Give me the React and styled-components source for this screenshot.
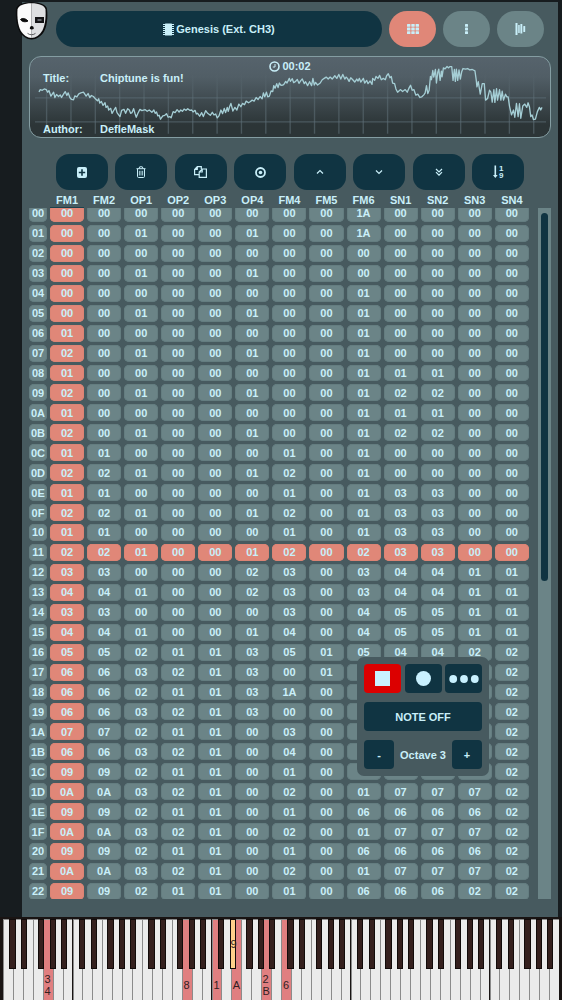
import React, { useLayoutEffect, useRef, useState } from "react";
//styled-components
import styled, { createGlobalStyle } from "styled-components";

const GlobalStyle = createGlobalStyle`
  * {
    box-sizing: border-box;
  }
  body {
    margin: 0;
    background-color: #171c1f;
    color: #c9eff9;
    font-family: "Liberation Sans", Arial, sans-serif;
    font-size: 11px;
    font-weight: bold;
    line-height: 12px;
  }
  button {
    border: 0;
    padding: 0;
    color: inherit;
    font: inherit;
    cursor: pointer;
  }
  svg {
    display: block;
  }
`;

//layout
const DivApp = styled.div`
  position: relative;
  display: flex;
  flex-direction: column;
  height: 100vh;
  padding-top: 2px;
`;
const MainPanel = styled.main`
  position: relative;
  flex: 1;
  min-height: 0;
  display: flex;
  flex-direction: column;
  margin: 0 4px 0 22px;
  padding: 9px 7px 18px;
  background-color: #475a5f;
`;
const SvgLogo = styled.svg`
  position: absolute;
  top: -1px;
  left: -8px;
  width: 35px;
  height: 40px;
`;

//header
const Header = styled.header`
  display: flex;
  gap: 7px;
  padding: 0 7px 0 27px;
`;
const ButtonSystem = styled.button`
  flex: 1;
  display: flex;
  align-items: center;
  justify-content: center;
  gap: 2px;
  height: 36px;
  border-radius: 18px;
  background-color: #103442;
`;
const ButtonView = styled.button`
  display: flex;
  align-items: center;
  justify-content: center;
  width: 47px;
  height: 36px;
  border-radius: 18px;
  background-color: ${({ $active }) => ($active ? "#e08778" : "#6b8487")};
`;

//display
const SectionDisplay = styled.section`
  position: relative;
  display: flex;
  flex-direction: column;
  height: 82px;
  margin-top: 9px;
  padding: 3px 13px 2px;
  border: 1px solid #849da2;
  border-radius: 12px;
  background: linear-gradient(#56636c 0%, #515e66 25%, #2c3537 85%);
`;
const SvgWave = styled.svg`
  position: absolute;
  inset: 0;
  width: 100%;
  height: 100%;
`;
const DivTime = styled.div`
  position: relative;
  display: flex;
  align-items: center;
  justify-content: center;
  gap: 2px;
`;
const DlSong = styled.dl`
  position: relative;
  flex: 1;
  display: flex;
  flex-direction: column;
  justify-content: space-between;
  margin: 0;
`;
const DivSongRow = styled.div`
  display: flex;
`;
const DtLabel = styled.dt`
  width: 57px;
`;
const DdValue = styled.dd`
  margin: 0;
`;

//toolbar
const DivToolbar = styled.div`
  display: flex;
  justify-content: space-between;
  margin: 16px 27px 1px;
`;
const ButtonTool = styled.button`
  display: flex;
  align-items: center;
  justify-content: center;
  width: 52px;
  height: 36px;
  border-radius: 13px;
  background-color: #103442;
`;

//order list
const DivOrders = styled.div`
  flex: 1;
  min-height: 0;
  display: flex;
  gap: 6px;
`;
const DivViewport = styled.div`
  flex: 1;
  min-width: 0;
  margin-left: -3px;
  overflow: hidden;
`;
const TableOrders = styled.table`
  width: 100%;
  height: calc(100% + 13px);
  table-layout: fixed;
  border-collapse: separate;
  border-spacing: 3px;
`;
const ThChannel = styled.th`
  position: sticky;
  top: 0;
  z-index: 1;
  height: 17px;
  width: ${({ $narrow }) => ($narrow ? "18px" : "auto")};
  padding: 2px 0 0;
  background-color: #475a5f;
  border-bottom: 1px solid ${({ $active }) => ($active ? "#1a424e" : "#475a5f")};
`;
const ThNumber = styled.th`
  padding: 0;
  border-radius: 5px;
  background-color: #6b8487;
  box-shadow: inset 0 0 0 1px #647d80;
`;
const TdOrder = styled.td`
  padding: 0;
  border-radius: 5px;
  text-align: center;
  background-color: ${({ $active }) => ($active ? "#e08778" : "#6b8487")};
  box-shadow: inset 0 0 0 1px ${({ $active }) => ($active ? "#dc8475" : "#647d80")};
`;
const DivTrack = styled.div`
  width: 13px;
  margin-top: 17px;
  padding: 5px 3px;
  background-color: #6b8487;
`;
const DivThumb = styled.div`
  height: 54%;
  border-radius: 4px;
  background-color: #103442;
`;

//floating pad
const DivPad = styled.div`
  position: absolute;
  right: 73px;
  bottom: 224px;
  z-index: 2;
  display: grid;
  gap: 9px;
  width: 132px;
  padding: 7px;
  border-radius: 7px;
  background-color: #475a5f;
`;
const DivPadRow = styled.div`
  display: flex;
  align-items: center;
  justify-content: space-between;
`;
const ButtonPad = styled.button`
  display: flex;
  align-items: center;
  justify-content: center;
  width: ${({ $width }) => $width || "37px"};
  height: 29px;
  border-radius: 4px;
  background-color: ${({ $recording }) => ($recording ? "#dc0000" : "#103442")};
`;

//keyboard
const DivKeyboard = styled.div`
  display: flex;
  height: 83px;
  padding: 2px 3px 0;
  background-color: #191413;
`;
const DivOctave = styled.div`
  position: relative;
  flex: 1;
  display: flex;
`;
const ButtonWhite = styled.button`
  flex: 1;
  display: flex;
  align-items: flex-end;
  justify-content: center;
  min-width: 0;
  height: 81px;
  padding-bottom: ${({ $lines }) => ($lines > 1 ? "3px" : "9px")};
  border-top: 1px solid #8b8b8b;
  background-color: ${({ $pressed }) => ($pressed ? "#e07f80" : "#ebebeb")};
  box-shadow: inset 1px 0 0 #8b8b8b;
  color: #33201f;
  font-weight: normal;
  text-align: left;
  white-space: pre-line;
`;
const ButtonBlack = styled.button`
  position: absolute;
  top: 0;
  left: ${({ $left }) => $left};
  width: 9%;
  height: 50px;
  border: 1px solid #120b0a;
  background-color: ${({ $pressed }) => ($pressed ? "#ffd08a" : "#35201e")};
  color: #33201f;
  font-weight: normal;
`;

const channels = ["FM1", "FM2", "OP1", "OP2", "OP3", "OP4", "FM4", "FM5", "FM6", "SN1", "SN2", "SN3", "SN4"];

//"--" is an empty cell
const orders = [
  "00 00 00 00 00 00 00 00 1A 00 00 00 00",
  "00 00 01 00 00 01 00 00 1A 00 00 00 00",
  "00 00 00 00 00 00 00 00 00 00 00 00 00",
  "00 00 01 00 00 01 00 00 00 00 00 00 00",
  "00 00 00 00 00 00 00 00 01 00 00 00 00",
  "00 00 01 00 00 01 00 00 01 00 00 00 00",
  "01 00 00 00 00 00 00 00 01 00 00 00 00",
  "02 00 01 00 00 01 00 00 01 00 00 00 00",
  "01 00 00 00 00 00 00 00 01 01 01 00 00",
  "02 00 01 00 00 01 00 00 01 02 02 00 00",
  "01 00 00 00 00 00 00 00 01 01 01 00 00",
  "02 00 01 00 00 01 00 00 01 02 02 00 00",
  "01 01 00 00 00 00 01 00 01 00 00 00 00",
  "02 02 01 00 00 01 02 00 01 00 00 00 00",
  "01 01 00 00 00 00 01 00 01 03 03 00 00",
  "02 02 01 00 00 01 02 00 01 03 03 00 00",
  "01 01 00 00 00 00 01 00 01 03 03 00 00",
  "02 02 01 00 00 01 02 00 02 03 03 00 00",
  "03 03 00 00 00 02 03 00 03 04 04 01 01",
  "04 04 01 00 00 02 03 00 03 04 04 01 01",
  "03 03 00 00 00 00 03 00 04 05 05 01 01",
  "04 04 01 00 00 01 04 00 04 05 05 01 01",
  "05 05 02 01 01 03 05 01 05 04 04 02 02",
  "06 06 03 02 01 03 00 01 -- -- -- -- 02",
  "06 06 02 01 01 03 1A 00 -- -- -- -- 02",
  "06 06 03 02 01 03 00 00 -- -- -- -- 02",
  "07 07 02 01 01 00 03 00 -- -- -- -- 02",
  "06 06 03 02 01 00 04 00 -- -- -- -- 02",
  "09 09 02 01 01 00 01 00 -- -- -- -- 02",
  "0A 0A 03 02 01 00 02 00 01 07 07 07 02",
  "09 09 02 01 01 00 01 00 06 06 06 06 02",
  "0A 0A 03 02 01 00 02 00 01 07 07 07 02",
  "09 09 02 01 01 00 01 00 06 06 06 06 02",
  "0A 0A 03 02 01 00 02 00 01 07 07 07 02",
  "09 09 02 01 01 00 01 00 06 06 06 02 02",
].map((row) => row.split(" "));

//pressed keys, by white key number and by octave-note for the black ones
const whitePressed = { 4: "3\n4", 18: "8", 21: "1", 23: "A", 26: "2\nB", 28: "6" };
const blackPressed = { "3-1": "9" };
const blackKeys = [
  { left: "9%", name: "C#" },
  { left: "26%", name: "D#" },
  { left: "50%", name: "F#" },
  { left: "67%", name: "G#" },
  { left: "83%", name: "A#" },
];
const whiteNames = ["C", "D", "E", "F", "G", "A", "B"];

const wave =
  "114,275 118,268 124,270 130,266 136,268 140,276 144,271 150,288 155,280 158,276 162,292 167,283 173,289 178,284 182,292 188,282 193,274 198,286 202,278 207,292 212,298 218,299 222,287 228,290 234,281 240,278 248,276 256,288 262,280 267,292 272,286 278,289 284,296 290,302 294,296 297,309 302,304 307,316 313,308 316,322 321,318 324,330 330,325 334,340 340,330 345,322 349,338 354,345 358,350 363,331 370,328 375,340 381,326 386,330 390,340 394,338 399,326 403,340 407,352 412,340 418,328 424,332 434,329 440,334 446,330 454,337 460,330 464,340 468,336 472,348 476,346 480,358 487,348 493,346 498,341 503,352 508,350 512,354 518,335 524,338 530,329 536,336 541,330 546,334 551,327 557,331 562,326 568,331 574,330 578,336 584,331 588,342 592,340 598,349 604,338 609,350 616,332 622,340 630,346 636,337 641,345 646,342 651,354 656,348 662,330 667,341 672,325 676,338 681,322 684,334 688,320 692,310 698,333 704,322 710,330 716,312 722,320 727,310 733,314 738,303 745,308 750,305 756,300 762,303 768,292 774,298 780,289 786,296 790,278 794,290 799,276 803,290 808,288 813,272 818,274 821,256 825,264 830,250 834,262 838,248 843,255 849,254 853,250 857,243 861,248 868,234 871,243 877,235 881,247 887,243 892,237 897,249 903,240 907,236 913,250 917,244 923,256 929,244 935,256 939,234 943,254 947,246 953,254 961,248 967,238 973,234 979,230 985,236 991,230 997,236 1005,226 1011,234 1017,222 1023,236 1029,222 1035,236 1039,230 1043,234 1048,243 1053,232 1059,238 1065,245 1071,236 1075,242 1079,234 1083,245 1091,234 1095,248 1101,240 1105,250 1111,242 1117,252 1119,234 1125,240 1129,228 1135,234 1140,225 1145,238 1151,234 1157,238 1161,226 1166,220 1171,232 1175,228 1179,248 1185,250 1189,266 1194,276 1203,268 1209,274 1217,268 1223,276 1229,262 1233,255 1238,270 1243,268 1249,285 1255,282 1261,292 1267,290 1273,284 1277,278 1281,256 1285,280 1289,270 1293,228 1296,238 1300,210 1303,230 1308,207 1311,248 1315,215 1318,206 1322,240 1326,212 1328,229 1332,202 1337,205 1343,198 1347,202 1352,198 1357,198 1361,240 1365,207 1368,243 1371,206 1375,240 1379,208 1383,236 1387,214 1391,204 1399,206 1405,204 1411,208 1419,207 1427,211 1431,240 1433,260 1437,244 1443,282 1449,250 1455,250 1459,300 1465,295 1471,270 1475,276 1479,306 1484,268 1487,307 1492,265 1495,300 1501,268 1505,300 1509,273 1513,300 1519,282 1523,290 1527,290 1531,318 1537,345 1543,330 1547,352 1552,310 1557,350 1561,311 1565,355 1571,318 1577,312 1583,322 1587,308 1591,320 1595,350 1599,345 1603,359 1609,358 1615,335 1621,322 1625,330 1629,322";

//icons
const LogoMask = () => (
  <SvgLogo viewBox="0 0 35 40" aria-hidden="true">
    <path d="M17.500 1C9 1 2.500 4 2 8c-.6 9 .6 17 3.500 22.500C8 35 13 38.500 17.500 38.500S27.500 35 30 30.500C33 25 34 17 33 8 32.500 4 26 1 17.500 1z" fill="#0b0b0c" />
    <path d="M17.500 2.200C10 2.200 4 4.600 3.500 8.500 3 17 4 24.500 6.600 29.500 9 34 13.500 37 17.500 37z" fill="#fbfbfb" />
    <path d="M17.500 2.200C25 2.200 31 4.600 31.500 8.500 32 17 31 24.500 28.400 29.500 26 34 21.500 37 17.500 37z" fill="#dedfe1" />
    <path d="M6.500 18.500c1.500-1.600 4.500-1.600 7.500 1.500-2.500 1.300-6 1-7.500-1.500z" fill="#0a0a0a" stroke="#0a0a0a" strokeWidth="1" />
    <rect x="21" y="16" width="9" height="6" fill="#141416" />
    <rect x="23.500" y="18" width="4" height="2" fill="#63656a" />
    <path d="M17.800 25c1.400 0 2 1.200 2 2.800-.8.900-3.200.9-4 0 0-1.600.6-2.800 2-2.800z" fill="#0a0a0a" />
    <path d="M13.500 32.300c2 1.900 6 1.900 8 0" fill="none" stroke="#3a3a3c" strokeWidth="0.800" />
  </SvgLogo>
);
const IconChip = () => (
  <svg width="11" height="13" viewBox="0 0 11 13" fill="currentColor" aria-hidden="true">
    <rect x="2" y="0.500" width="7" height="12" rx="0.600" />
    {[1, 3, 5, 7, 9, 11].map((y) => (
      <path key={y} d={`M0 ${y}h2v1H0zM9 ${y}h2v1H9z`} />
    ))}
  </svg>
);
const IconGrid = () => (
  <svg width="12" height="10" viewBox="0 0 12 10" fill="currentColor" aria-hidden="true">
    {[0, 3.600, 7.200].map((y) =>
      [0, 4.300, 8.600].map((x) => <rect key={`${x}-${y}`} x={x} y={y} width="3.400" height="2.800" rx="0.500" />)
    )}
  </svg>
);
const IconDots = () => (
  <svg width="3" height="10" viewBox="0 0 3 10" fill="currentColor" aria-hidden="true">
    {[0, 3.600, 7.200].map((y) => (
      <rect key={y} y={y} width="3" height="2.800" rx="0.600" />
    ))}
  </svg>
);
const IconBars = () => (
  <svg width="11" height="12" viewBox="0 0 11 12" fill="currentColor" aria-hidden="true">
    <rect x="0.500" y="0" width="2" height="12" />
    <rect x="3.200" y="2" width="1.500" height="8" />
    <rect x="5.400" y="1" width="1.900" height="9.500" />
    <rect x="8.300" y="3" width="1.900" height="6" rx="0.500" />
  </svg>
);
const IconClock = () => (
  <svg width="11" height="11" viewBox="0 0 11 11" fill="none" stroke="currentColor" aria-hidden="true">
    <circle cx="5.500" cy="5.500" r="4.500" strokeWidth="1.600" />
    <path d="M6 3v3H3.800" strokeWidth="1" />
  </svg>
);
const IconPlus = () => (
  <svg width="10" height="11" viewBox="0 0 10 11" aria-hidden="true">
    <rect width="10" height="11" rx="2" fill="currentColor" />
    <path d="M5 2.300v6.400M1.800 5.500h6.400" stroke="#103442" strokeWidth="1.600" />
  </svg>
);
const IconTrash = () => (
  <svg width="10" height="12" viewBox="0 0 10 12" fill="none" stroke="currentColor" aria-hidden="true">
    <path d="M0.500 2.700h9M3 2.500l.7-1.700h2.600L7 2.500M1.500 3v7.300q0 1.200 1 1.200h5q1 0 1-1.200V3" />
    <path d="M3.400 4.800v4.700M5 4.800v4.700M6.600 4.800v4.700" strokeWidth="0.800" />
  </svg>
);
const IconCopy = () => (
  <svg width="13" height="12" viewBox="0 0 13 12" fill="none" stroke="currentColor" strokeWidth="1.200" aria-hidden="true">
    <path d="M5 8.700H.6V3.500L3.300.6h4V3M3.300.6v2.900H.6" />
    <path d="M5.200 11.400V6L8.200 3h4.200v8.400zM8.200 3v3h-3" />
  </svg>
);
const IconTarget = () => (
  <svg width="11" height="11" viewBox="0 0 11 11" aria-hidden="true">
    <circle cx="5.500" cy="5.500" r="4.500" fill="none" stroke="currentColor" strokeWidth="1.800" />
    <circle cx="5.500" cy="5.500" r="1.800" fill="currentColor" />
  </svg>
);
const IconAngle = ({ d }) => (
  <svg width="8" height="8" viewBox="0 0 8 8" fill="none" stroke="currentColor" strokeWidth="1.200" aria-hidden="true">
    <path d={d} />
  </svg>
);
const IconSort = () => (
  <svg width="14" height="18" viewBox="0 0 14 18" fill="currentColor" aria-hidden="true">
    <path d="M3.500 2.500h1.600V12h1.600l-2.400 3L2 12h1.500z" />
    <text x="8" y="8" fontSize="8">1</text>
    <text x="8" y="15" fontSize="8">9</text>
  </svg>
);

const tools = [
  { label: "Add row", icon: <IconPlus /> },
  { label: "Delete row", icon: <IconTrash /> },
  { label: "Clone row", icon: <IconCopy /> },
  { label: "Follow", icon: <IconTarget /> },
  { label: "Move up", icon: <IconAngle d="M1 5.500l3-3 3 3" /> },
  { label: "Move down", icon: <IconAngle d="M1 2.500l3 3 3-3" /> },
  { label: "Move to end", icon: <IconAngle d="M1 1l3 3 3-3M1 4.200l3 3 3-3" /> },
  { label: "Sort", icon: <IconSort /> },
];

const Wave = () => (
  <SvgWave viewBox="87 169 1566 243" preserveAspectRatio="none" aria-hidden="true">
    <defs>
      <linearGradient id="fade" gradientUnits="userSpaceOnUse" x1="0" y1="215" x2="0" y2="402">
        <stop offset="0" stopColor="#5f7078" stopOpacity="0" />
        <stop offset="0.400" stopColor="#5f7078" stopOpacity="0.500" />
        <stop offset="1" stopColor="#5f7078" stopOpacity="0.600" />
      </linearGradient>
    </defs>
    {[...Array(21)].map((_, i) => (
      <rect key={i} x={135 + i * 73.350} y="215" width="4" height="187" fill="url(#fade)" />
    ))}
    <path d="M102 293h1539M102 366h1539" stroke="#5f7078" strokeOpacity="0.600" strokeWidth="4" />
    <polyline points={wave} fill="none" stroke="#a5ced5" strokeWidth="4" strokeLinejoin="round" />
  </SvgWave>
);

const Keyboard = () => (
  <DivKeyboard>
    {[...Array(8)].map((_, oct) => (
      <DivOctave key={oct}>
        {whiteNames.map((name, i) => {
          const label = whitePressed[oct * 7 + i];
          return (
            <ButtonWhite
              key={name}
              aria-label={`${name}${oct}`}
              $pressed={!!label}
              $lines={label ? label.split("\n").length : 1}
            >
              {label}
            </ButtonWhite>
          );
        })}
        {blackKeys.map(({ left, name }, i) => {
          const label = blackPressed[`${oct}-${i}`];
          return (
            <ButtonBlack key={name} aria-label={`${name}${oct}`} $left={left} $pressed={!!label}>
              {label}
            </ButtonBlack>
          );
        })}
      </DivOctave>
    ))}
  </DivKeyboard>
);

const App = () => {
  const [view, setView] = useState("orders");
  const [octave, setOctave] = useState(3);
  const viewport = useRef(null);
  const currentRow = 17;

  useLayoutEffect(() => {
    viewport.current.scrollTop = 9;
  }, []);

  return (
    <DivApp>
      <GlobalStyle />
      <MainPanel>
        <LogoMask />
        <Header>
          <ButtonSystem>
            <IconChip />
            Genesis (Ext. CH3)
          </ButtonSystem>
          <ButtonView aria-label="Orders" $active={view === "orders"} onClick={() => setView("orders")}>
            <IconGrid />
          </ButtonView>
          <ButtonView aria-label="Pattern" $active={view === "pattern"} onClick={() => setView("pattern")}>
            <IconDots />
          </ButtonView>
          <ButtonView aria-label="Instruments" $active={view === "instruments"} onClick={() => setView("instruments")}>
            <IconBars />
          </ButtonView>
        </Header>
        <SectionDisplay>
          <Wave />
          <DivTime>
            <IconClock />
            00:02
          </DivTime>
          <DlSong>
            <DivSongRow>
              <DtLabel>Title:</DtLabel>
              <DdValue>Chiptune is fun!</DdValue>
            </DivSongRow>
            <DivSongRow>
              <DtLabel>Author:</DtLabel>
              <DdValue>DefleMask</DdValue>
            </DivSongRow>
          </DlSong>
        </SectionDisplay>
        <DivToolbar>
          {tools.map(({ label, icon }) => (
            <ButtonTool key={label} aria-label={label}>
              {icon}
            </ButtonTool>
          ))}
        </DivToolbar>
        <DivOrders>
          <DivViewport ref={viewport}>
            <TableOrders>
              <thead>
                <tr>
                  <ThChannel $narrow />
                  {channels.map((name, i) => (
                    <ThChannel key={name} scope="col" $active={i === 0}>
                      {name}
                    </ThChannel>
                  ))}
                </tr>
              </thead>
              <tbody>
                {orders.map((row, r) => (
                  <tr key={r}>
                    <ThNumber scope="row">{r.toString(16).toUpperCase().padStart(2, "0")}</ThNumber>
                    {row.map((value, c) => (
                      <TdOrder key={c} $active={c === 0 || r === currentRow}>
                        {value !== "--" && value}
                      </TdOrder>
                    ))}
                  </tr>
                ))}
              </tbody>
            </TableOrders>
          </DivViewport>
          <DivTrack>
            <DivThumb />
          </DivTrack>
        </DivOrders>
      </MainPanel>
      <DivPad>
        <DivPadRow>
          <ButtonPad aria-label="Record" $recording>
            <svg width="15" height="15" viewBox="0 0 15 15" aria-hidden="true">
              <rect width="15" height="15" fill="#c9f1ff" />
            </svg>
          </ButtonPad>
          <ButtonPad aria-label="Play">
            <svg width="15" height="15" viewBox="0 0 15 15" aria-hidden="true">
              <circle cx="7.500" cy="7.500" r="7.500" fill="#c9f1ff" />
            </svg>
          </ButtonPad>
          <ButtonPad aria-label="More">
            <svg width="30" height="8" viewBox="0 0 30 8" fill="#c9f1ff" aria-hidden="true">
              <circle cx="4.200" cy="4" r="3.900" />
              <circle cx="15" cy="4" r="3.900" />
              <circle cx="25.800" cy="4" r="3.900" />
            </svg>
          </ButtonPad>
        </DivPadRow>
        <ButtonPad $width="100%">NOTE OFF</ButtonPad>
        <DivPadRow>
          <ButtonPad $width="30px" onClick={() => setOctave(octave - 1)}>
            -
          </ButtonPad>
          Octave {octave}
          <ButtonPad $width="30px" onClick={() => setOctave(octave + 1)}>
            +
          </ButtonPad>
        </DivPadRow>
      </DivPad>
      <Keyboard />
    </DivApp>
  );
};

export default App;
